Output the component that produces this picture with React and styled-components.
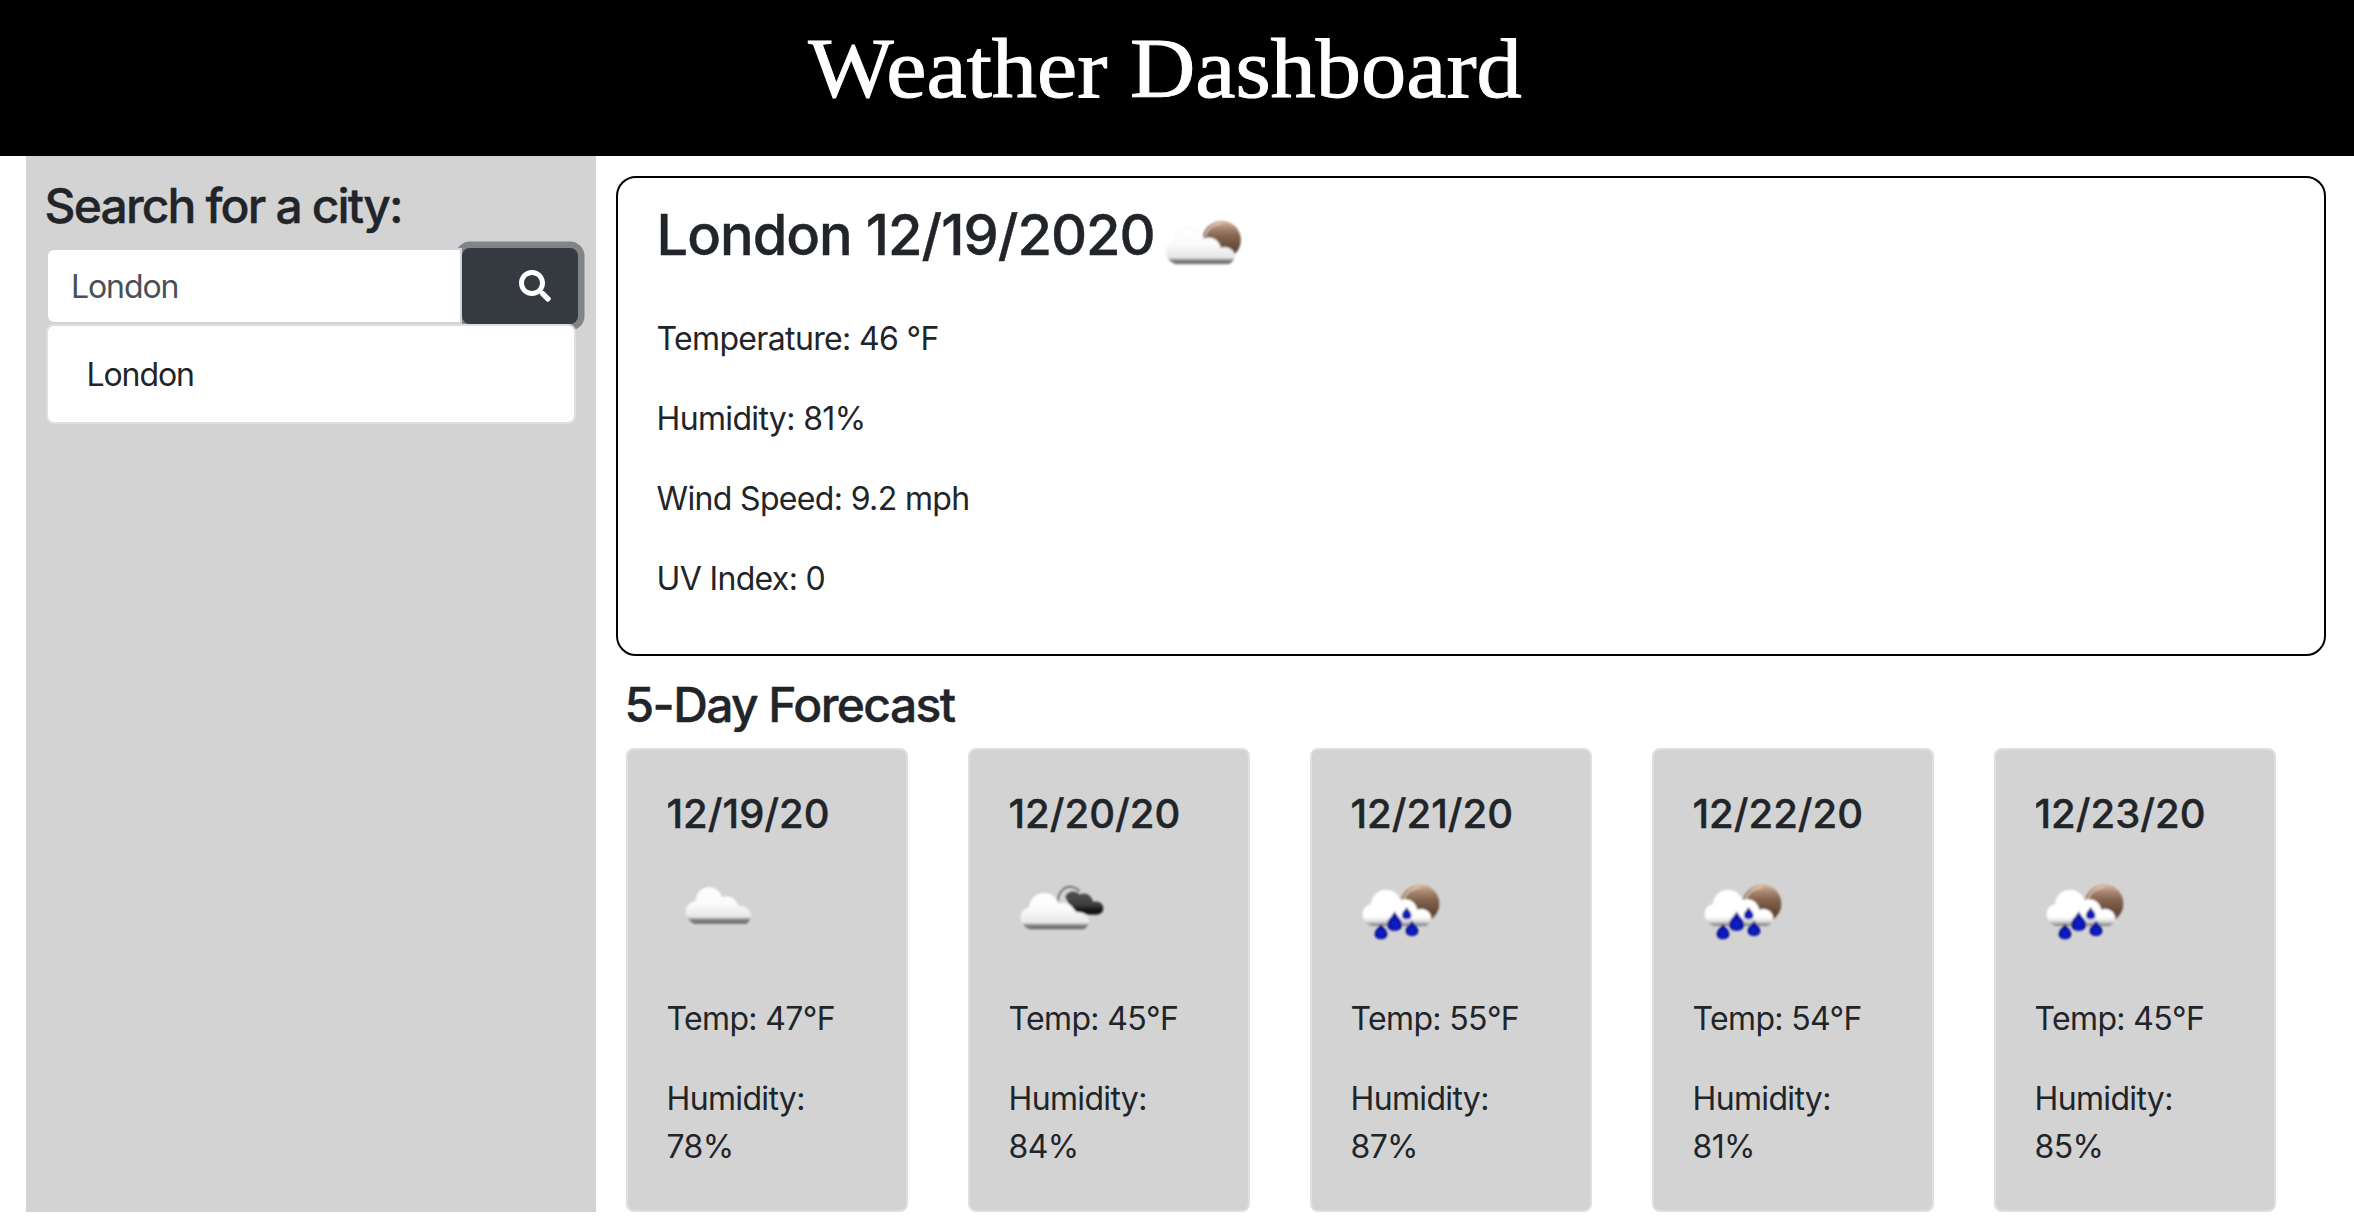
import React, { useId } from "react";
import styled, { createGlobalStyle } from "styled-components";
import { FaSearch } from "react-icons/fa";

const GlobalStyle = createGlobalStyle`
  *, *::before, *::after { box-sizing: border-box; }
  body {
    margin: 0;
    background: #fff;
    color: #212529;
    font-family: Inter, "Liberation Sans", sans-serif;
    font-size: 32px;
    line-height: 48px;
    letter-spacing: -0.65px;
  }
  h1, h2, h3, p { margin: 0; }
`;

const Header = styled.header`
  height: 156px;
  padding: 20px 24px 0 0;
  background: #000;
  color: #fff;
  text-align: center;
`;

const Title = styled.h1`
  font: 400 84px/98px "Liberation Serif", serif;
  letter-spacing: 0;
  transform: scaleX(1.077);
  -webkit-text-stroke: 1px #fff;
`;

const Page = styled.div`
  display: flex;
  height: 1056px;
  padding: 0 28px 0 26px;
`;

const Sidebar = styled.aside`
  width: 570px;
  flex: none;
  padding: 21px 20px 0;
  background: #d3d3d3;
`;

const Heading = styled.h2`
  margin-left: -1.5px;
  font-size: ${(p) => p.$size}px;
  line-height: 58px;
  font-weight: 500;
  letter-spacing: ${(p) => p.$tracking}px;
  -webkit-text-stroke: 0.4px currentColor;
`;

const SearchRow = styled.form`
  display: flex;
  margin-top: 13px;
`;

const SearchInput = styled.input`
  position: relative;
  z-index: 1;
  flex: none;
  width: 416px;
  height: 76px;
  padding: 0 23px;
  border: 2px solid #ced4da;
  border-radius: 8px 0 0 8px;
  outline: none;
  background: #fff;
  color: #495057;
  font: inherit;
  letter-spacing: -1.1px;
`;

const SearchButton = styled.button`
  display: flex;
  flex: none;
  align-items: center;
  justify-content: flex-end;
  width: 116px;
  height: 76px;
  padding: 0 27px 0 0;
  border: 0;
  border-radius: 8px;
  background: #343a40;
  color: #fff;
  box-shadow: 0 0 0 6.5px #828588;
  svg { display: block; width: 32px; height: 32px; }
`;

const History = styled.div`
  position: relative;
  z-index: 1;
  width: 530px;
  height: 100px;
  padding: 25px 38.5px;
  border: 2px solid #dfdfdf;
  border-radius: 8px;
  background: #fff;
  letter-spacing: -1.1px;
`;

const Main = styled.main`
  flex: 1;
  padding: 20px 0 0 20px;
`;

const Current = styled.section`
  height: 480px;
  padding: 28px 40px;
  border: 2px solid #000;
  border-radius: 20px;
`;

const CityRow = styled.div`
  display: flex;
  height: 109px;
  svg { margin: -12px 0 0 1px; }
`;

const Metric = styled.p`
  margin: 0 0 32px -1.5px;
`;

const Forecast = styled.section`
  padding: 20px 0 0 10px;
`;

const Days = styled.div`
  display: flex;
  gap: 60px;
  margin-top: 14px;
`;

const Day = styled.article`
  width: 282px;
  height: 464px;
  padding: 40px 40px 0;
  border: 2px solid #dfdfdf;
  border-radius: 8px;
  background: #d3d3d3;
  svg { margin: 20px 0 37px; }
`;

const DayDate = styled.h3`
  margin-left: -1.5px;
  font-size: 40px;
  line-height: 48px;
  font-weight: 500;
  letter-spacing: 0;
  -webkit-text-stroke: 0.4px currentColor;
`;

const IconSvg = styled.svg`
  display: block;
  flex: none;
  width: 100px;
  height: 100px;
`;

const CLOUD =
  "M100 168 C84 168 68 150 68 132 C68 118 76 106 92 103 C96 76 114 59 138 59 C160 59 176 72 181 91 C204 82 226 94 232 119 C252 112 273 124 273 143 C273 156 264 168 250 168 Z";
const SMALL_CLOUD =
  "M102 161 C86 152 75 138 77 121 C79 107 90 97 107 93 C108 68 126 52 147 52 C168 53 181 64 186 81 C206 73 228 84 236 108 C254 106 270 117 272 132 C274 146 267 158 257 161 Z";
const DROP = "M0 -24 C5 -10 18 -2 18 14 C18 26 10 32 0 32 C-10 32 -18 26 -18 14 C-18 -2 -5 -10 0 -24 Z";

const VIEWS = {
  partly: "43.5 -19 300 300",
  cloud: "24 -36 300 300",
  broken: "30 -36 300 300",
  rain: "36 -36 300 300",
};

function Moon({ id, y }) {
  return (
    <g transform={`translate(0 ${y})`}>
      <circle cx="240" cy="101" r="58" fill={`url(#${id}moon)`} />
      <path d="M190 91 Q202 55 240 52" fill="none" stroke="#ead7cb" strokeWidth="4" opacity=".85" />
    </g>
  );
}

function WeatherIcon({ kind }) {
  const id = useId().replace(/[^a-zA-Z0-9]/g, "");
  return (
    <IconSvg viewBox={VIEWS[kind]}>
      <defs>
        <linearGradient id={`${id}cloud`} x1="0" y1="0" x2="0" y2="1">
          <stop offset="0" stopColor="#fff" />
          <stop offset=".45" stopColor="#fbfbfb" />
          <stop offset=".82" stopColor="#e6e6e6" />
          <stop offset=".88" stopColor="#8c8c8c" />
          <stop offset="1" stopColor="#5f5f5f" />
        </linearGradient>
        <linearGradient id={`${id}wet`} x1="0" y1="0" x2="0" y2="1">
          <stop offset="0" stopColor="#fff" />
          <stop offset=".75" stopColor="#fff" />
          <stop offset=".86" stopColor="#e2e2e2" />
          <stop offset="1" stopColor="#777" />
        </linearGradient>
        <linearGradient id={`${id}moon`} x1="0" y1="0" x2="0" y2="1">
          <stop offset="0" stopColor="#dcbba5" />
          <stop offset=".2" stopColor="#a88570" />
          <stop offset=".4" stopColor="#846450" />
          <stop offset=".75" stopColor="#604633" />
          <stop offset="1" stopColor="#8b6b55" />
        </linearGradient>
        <linearGradient id={`${id}dark`} x1="0" y1="0" x2="0" y2="1">
          <stop offset="0" stopColor="#505050" />
          <stop offset=".55" stopColor="#404040" />
          <stop offset=".85" stopColor="#111" />
          <stop offset="1" stopColor="#222" />
        </linearGradient>
        <radialGradient id={`${id}drop`} cx=".5" cy=".65" r=".6">
          <stop offset="0" stopColor="#1224d8" />
          <stop offset=".55" stopColor="#0712a8" />
          <stop offset="1" stopColor="#020468" />
        </radialGradient>
        <filter id={`${id}soft`} x="-20%" y="-20%" width="140%" height="140%">
          <feGaussianBlur stdDeviation={kind === "cloud" ? 3.6 : 2.5} />
        </filter>
      </defs>
      <g filter={`url(#${id}soft)`}>
        {kind === "partly" && (
          <>
            <Moon id={id} y={18} />
            <g transform="translate(6 24)">
              <path d={CLOUD} fill={`url(#${id}cloud)`} stroke="#e9e9e9" strokeWidth="1.5" />
            </g>
          </>
        )}
        {kind === "cloud" && <path d={SMALL_CLOUD} fill={`url(#${id}cloud)`} />}
        {kind === "broken" && (
          <>
            <path d="M172 94 Q180 51 211 50 Q229 51 239 65" fill="none" stroke="#777" strokeWidth="6" />
            <path
              d="M196 79 C206 60 229 61 239 74 C255 64 274 75 280 96 C297 91 310 101 310 115 C309 127 302 133 291 134 L245 134 L210 110 Z"
              fill={`url(#${id}dark)`}
            />
            <g transform="translate(-6 10)">
              <path d={CLOUD} fill={`url(#${id}cloud)`} />
            </g>
          </>
        )}
        {kind === "rain" && (
          <>
            <Moon id={id} y={0} />
            <path d={CLOUD} fill={`url(#${id}wet)`} />
            <g fill={`url(#${id}drop)`}>
              <path d={DROP} transform="translate(164 149) scale(1.25 1.05)" />
              <path d={DROP} transform="translate(200 127) scale(.8 .66)" />
              <path d={DROP} transform="translate(216 171) scale(1.05 .84)" />
              <path d={DROP} transform="translate(123 181) scale(1.05 .84)" />
            </g>
          </>
        )}
      </g>
    </IconSvg>
  );
}

const days = [
  { date: "12/19/20", kind: "cloud", temp: 47, humidity: 78 },
  { date: "12/20/20", kind: "broken", temp: 45, humidity: 84 },
  { date: "12/21/20", kind: "rain", temp: 55, humidity: 87 },
  { date: "12/22/20", kind: "rain", temp: 54, humidity: 81 },
  { date: "12/23/20", kind: "rain", temp: 45, humidity: 85 },
];

export default function App() {
  return (
    <>
      <GlobalStyle />
      <Header>
        <Title>Weather Dashboard</Title>
      </Header>
      <Page>
        <Sidebar>
          <Heading $size={48} $tracking={-1.85}>Search for a city:</Heading>
          <SearchRow>
            <SearchInput defaultValue="London" aria-label="City" />
            <SearchButton type="button" aria-label="Search">
              <FaSearch />
            </SearchButton>
          </SearchRow>
          <History>London</History>
        </Sidebar>
        <Main>
          <Current>
            <CityRow>
              <Heading $size={56} $tracking={-1}>London 12/19/2020</Heading>
              <WeatherIcon kind="partly" />
            </CityRow>
            <Metric>Temperature: 46 °F</Metric>
            <Metric>Humidity: 81%</Metric>
            <Metric>Wind Speed: 9.2 mph</Metric>
            <Metric>UV Index: 0</Metric>
          </Current>
          <Forecast>
            <Heading $size={48} $tracking={-1.6}>5-Day Forecast</Heading>
            <Days>
              {days.map((d) => (
                <Day key={d.date}>
                  <DayDate>{d.date}</DayDate>
                  <WeatherIcon kind={d.kind} />
                  <Metric>Temp: {d.temp}°F</Metric>
                  <Metric>Humidity: {d.humidity}%</Metric>
                </Day>
              ))}
            </Days>
          </Forecast>
        </Main>
      </Page>
    </>
  );
}
